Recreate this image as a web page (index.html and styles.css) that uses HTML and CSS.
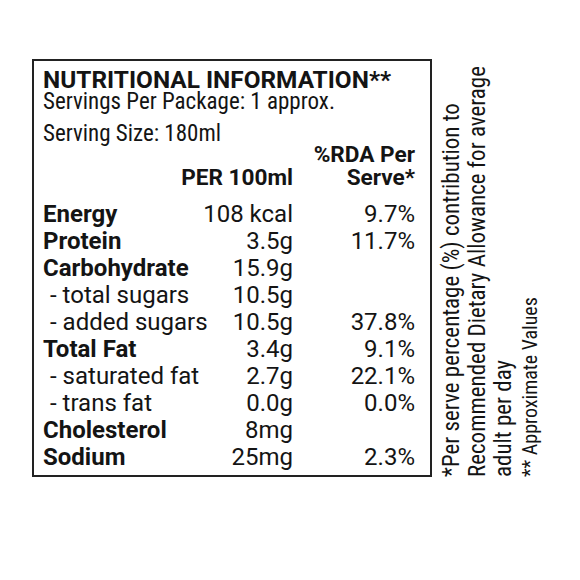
FILE: index.html
```html
<!DOCTYPE html>
<html lang="en">
<head>
    <meta charset="UTF-8">
    <meta name="viewport" content="width=device-width, initial-scale=1.0">
    <title>Nutritional Information</title>
    <link rel="stylesheet" href="styles.css">
</head>
<body>
    <div class="page">
        <div class="label">
            <div class="title">NUTRITIONAL INFORMATION**</div>
            <div class="info">Servings Per Package: 1 approx.</div>
            <div class="info size">Serving Size: 180ml</div>

            <div class="head">
                <div class="head-per">PER 100ml</div>
                <div class="head-rda">%RDA Per<br>Serve*</div>
            </div>

            <div class="rows">
                <div class="name main">Energy</div><div class="val">108 kcal</div><div class="rda">9.7%</div>
                <div class="name main">Protein</div><div class="val">3.5g</div><div class="rda">11.7%</div>
                <div class="name main">Carbohydrate</div><div class="val">15.9g</div><div class="rda"></div>
                <div class="name sub">- total sugars</div><div class="val">10.5g</div><div class="rda"></div>
                <div class="name sub">- added sugars</div><div class="val">10.5g</div><div class="rda">37.8%</div>
                <div class="name main">Total Fat</div><div class="val">3.4g</div><div class="rda">9.1%</div>
                <div class="name sub">- saturated fat</div><div class="val">2.7g</div><div class="rda">22.1%</div>
                <div class="name sub">- trans fat</div><div class="val">0.0g</div><div class="rda">0.0%</div>
                <div class="name main">Cholesterol</div><div class="val">8mg</div><div class="rda"></div>
                <div class="name main">Sodium</div><div class="val">25mg</div><div class="rda">2.3%</div>
            </div>
        </div>

        <!-- side note, read bottom to top -->
        <div class="note">
            <span class="note-line">*Per serve percentage (%) contribution to</span>
            <span class="note-line">Recommended Dietary Allowance for average</span>
            <span class="note-line">adult per day</span>
            <span class="note-line small">** Approximate Values</span>
        </div>
    </div>
</body>
</html>
```
FILE: styles.css
```css
body {
    margin: 0;
    padding: 0;
    background-color: #fff;
    color: #141414;
    font-family: "Roboto Condensed", "Roboto", sans-serif;
}
.page {
    display: flex;
    align-items: flex-end;
    padding: 59px 0 0 32px;
}
.label {
    width: 400px;
    box-sizing: border-box;
    border: 2px solid #222;
    padding: 8px 15px 4px 9px;
}
.title {
    font-family: "Roboto", sans-serif;
    font-weight: bold;
    font-size: 24.4px;
    line-height: 22px;
}
.info {
    font-size: 23px;
    line-height: 22px;
}
.info.size {
    line-height: 18px;
    margin-top: 12px;
}
.head {
    display: grid;
    grid-template-columns: 250px 122px;
    align-items: end;
    font-family: "Roboto", sans-serif;
    font-weight: bold;
    font-size: 22.6px;
    line-height: 23px;
    text-align: right;
}
.rows {
    display: grid;
    grid-template-columns: 157px 93px 122px;
    margin-top: 12px;
    font-family: "Roboto", sans-serif;
    font-size: 24px;
    line-height: 27px;
    white-space: nowrap;
}
.name.main {
    font-weight: bold;
}
.name.sub {
    padding-left: 7px;
}
.val, .rda {
    text-align: right;
}
.note {
    writing-mode: vertical-rl;
    transform: rotate(180deg);
    height: 418px;
    margin-left: 7px;
    font-size: 23px;
    line-height: 26px;
    white-space: nowrap;
}
.note-line {
    display: block;
}
.note-line.small {
    font-size: 20px;
}
```
